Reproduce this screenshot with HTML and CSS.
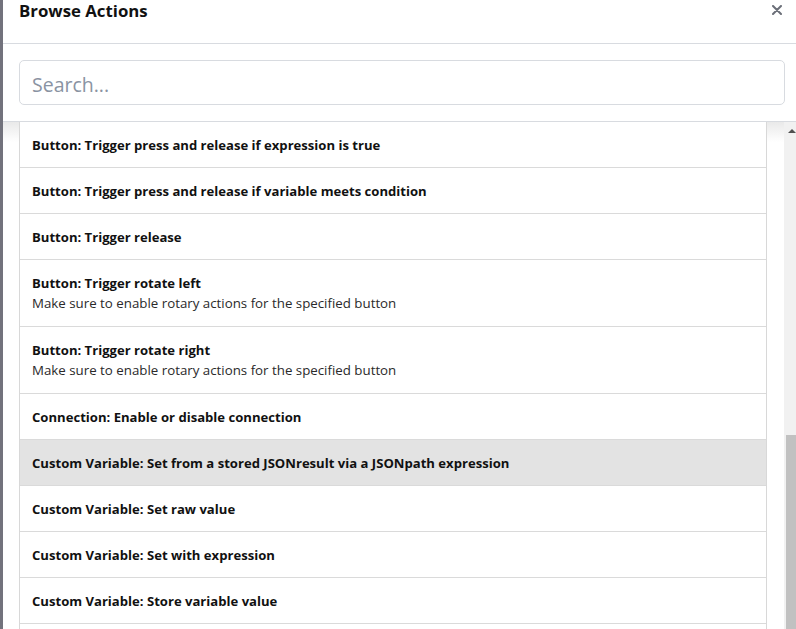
FILE: index.html
```html
<!DOCTYPE html>
<html>
<head>
<meta charset="utf-8">
<link rel="stylesheet" href="styles.css">
</head>
<body>
<div class="page">
  <div class="backdrop"></div>
  <div class="modal">
    <div class="modal-header">
      <h5 class="modal-title">Browse Actions</h5>
      <button class="close" aria-label="Close"><svg width="10" height="10" viewBox="0 0 10 10"><path d="M1 1L9 9M9 1L1 9" stroke="#6b6f78" stroke-width="2" stroke-linecap="round"/></svg></button>
    </div>
    <div class="search-row">
      <input class="search" type="text" placeholder="Search...">
    </div>
    <div class="modal-body">
      <div class="list">
        <div class="item"><div class="title">Button: Trigger press and release if expression is true</div></div>
        <div class="item"><div class="title">Button: Trigger press and release if variable meets condition</div></div>
        <div class="item"><div class="title">Button: Trigger release</div></div>
        <div class="item"><div class="title">Button: Trigger rotate left</div><div class="desc">Make sure to enable rotary actions for the specified button</div></div>
        <div class="item"><div class="title">Button: Trigger rotate right</div><div class="desc">Make sure to enable rotary actions for the specified button</div></div>
        <div class="item"><div class="title">Connection: Enable or disable connection</div></div>
        <div class="item active"><div class="title">Custom Variable: Set from a stored JSONresult via a JSONpath expression</div></div>
        <div class="item"><div class="title">Custom Variable: Set raw value</div></div>
        <div class="item"><div class="title">Custom Variable: Set with expression</div></div>
        <div class="item"><div class="title">Custom Variable: Store variable value</div></div>
        <div class="item empty"></div>
      </div>
      <div class="scrollbar">
        <div class="arrow"></div>
        <div class="track-space"></div>
        <div class="thumb"></div>
      </div>
    </div>
  </div>
</div>
</body>
</html>
```
FILE: styles.css
```css
html, body {
  margin: 0;
  padding: 0;
  height: 100%;
  overflow: hidden;
  background: #fff;
}
.page {
  display: flex;
  height: 629px;
  font-family: "Open Sans", "Noto Sans", sans-serif;
}
.backdrop {
  width: 3px;
  flex: none;
  background: #72727c;
}
.modal {
  flex: 1;
  display: flex;
  flex-direction: column;
  min-width: 0;
  background: #fff;
}
.modal-header {
  border-bottom: 1px solid #d8dbe0;
  display: flex;
  align-items: flex-start;
  justify-content: space-between;
  padding: 1px 13px 0 16px;
  box-sizing: border-box;
  height: 44px;
  flex: none;
}
.modal-title {
  margin: 0;
  font-size: 16.8px;
  font-weight: 700;
  line-height: 19px;
  color: #111;
}
.close {
  border: 0;
  background: none;
  padding: 0;
  margin: 4px 1px 0 0;
  width: 10px;
  height: 10px;
  display: block;
}
.close svg {
  display: block;
}
.search-row {
  padding: 16px 11px 16px 16px;
  border-bottom: 1px solid #d8dbe0;
  flex: none;
}
.search {
  display: block;
  width: 100%;
  box-sizing: border-box;
  height: 45px;
  border: 1px solid #d8dbe0;
  border-radius: 5px;
  padding: 4px 12px 0 12px;
  font-family: "Open Sans", "Noto Sans", sans-serif;
  font-size: 19.5px;
  color: #333;
  outline: none;
}
.search::placeholder {
  color: #8a93a2;
}
.modal-body {
  flex: 1;
  display: flex;
  min-height: 0;
  overflow: hidden;
  background: linear-gradient(#e9e9e9, #fff 20px);
}
.list {
  margin-left: 16px;
  width: 748px;
  flex: none;
  border-left: 1px solid #d8d8d8;
  border-right: 1px solid #d8d8d8;
  box-sizing: border-box;
}
.item {
  background: #fff;
  border-bottom: 1px solid #dadada;
  padding: 13px 12px 11px 12px;
}
.item.empty {
  height: 21px;
}
.item.active {
  background: #e3e3e3;
}
.title {
  font-size: 13.1px;
  font-weight: 700;
  line-height: 21px;
  color: #111;
}
.desc {
  font-size: 13.3px;
  line-height: 19px;
  padding-bottom: 2px;
  color: #2a2a2a;
}
.scrollbar {
  margin-left: 17px;
  width: 15px;
  flex: none;
  background: #f1f1f1;
  display: flex;
  flex-direction: column;
  align-items: center;
}
.arrow {
  margin-top: 7px;
  width: 0;
  height: 0;
  border-left: 4px solid transparent;
  border-right: 4px solid transparent;
  border-bottom: 4px solid #505050;
}
.track-space {
  height: 302px;
}
.thumb {
  width: 11px;
  flex: 1;
  background: #c1c1c1;
}
```
